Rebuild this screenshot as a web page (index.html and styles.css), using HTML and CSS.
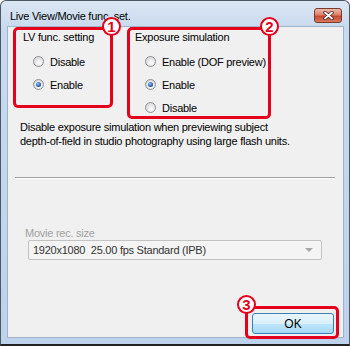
FILE: index.html
```html
<!DOCTYPE html>
<html lang="en">
<head>
    <meta charset="UTF-8">
    <title>Live View/Movie func. set.</title>
    <link rel="stylesheet" href="styles.css">
</head>
<body>
    <div class="window">
        <div class="titlebar">
            <div class="title">Live View/Movie func. set.</div>
            <div class="close">
                <svg width="13" height="9" viewBox="0 0 13 9">
                    <path d="M3 1.5 L10 7.5 M10 1.5 L3 7.5" stroke="#3a2020" stroke-width="3.4" stroke-linecap="round"/>
                    <path d="M3 1.5 L10 7.5 M10 1.5 L3 7.5" stroke="#fff" stroke-width="1.8" stroke-linecap="round"/>
                </svg>
            </div>
        </div>

        <div class="client">
            <div class="groups">
                <div class="mark group-lv">
                    <span class="num">1</span>
                    <div class="group-title">LV func. setting</div>
                    <div class="opts">
                        <div class="opt"><span class="radio"></span>Disable</div>
                        <div class="opt"><span class="radio checked"></span>Enable</div>
                    </div>
                </div>
                <div class="mark group-exp">
                    <span class="num">2</span>
                    <div class="group-title">Exposure simulation</div>
                    <div class="opts">
                        <div class="opt"><span class="radio"></span>Enable (DOF preview)</div>
                        <div class="opt"><span class="radio checked"></span>Enable</div>
                        <div class="opt"><span class="radio"></span>Disable</div>
                    </div>
                </div>
            </div>

            <p class="desc">Disable exposure simulation when previewing subject<br>depth-of-field in studio photography using large flash units.</p>

            <div class="separator"></div>

            <div class="field-label">Movie rec. size</div>
            <div class="select">
                <span>1920x1080&nbsp;&nbsp;25.00 fps Standard (IPB)</span>
                <span class="arrow"></span>
            </div>

            <div class="footer">
                <div class="mark ok-mark">
                    <span class="num num-left">3</span>
                    <button class="ok">OK</button>
                </div>
            </div>
        </div>
    </div>
</body>
</html>
```

FILE: styles.css
```css
body {
    margin: 0;
    font-family: 'Liberation Sans', Arial, sans-serif;
    font-size: 11px;
    letter-spacing: -0.25px;
    color: #000;
    background: #fff;
}
.window {
    width: 350px;
    height: 346px;
    box-sizing: border-box;
    border: 1px solid #4d5866;
    border-bottom: 2px solid #222;
    border-radius: 6px 6px 0 0;
    background: linear-gradient(#dbe6f3, #c9daee 26px, #bdd2eb);
    display: flex;
    flex-direction: column;
}
.titlebar {
    height: 25px;
    display: flex;
    justify-content: space-between;
    align-items: flex-start;
}
.title {
    padding: 8px 0 0 9px;
    line-height: 14px;
    color: #000;
}
.close {
    width: 26px;
    height: 13px;
    margin: 7px 7px 0 0;
    border: 1px solid #7a3a30;
    border-radius: 3px;
    background: linear-gradient(#efb9aa, #dd8069 45%, #c8462f 55%, #d87a5f);
    display: flex;
    align-items: center;
    justify-content: center;
}
.client {
    flex: 1;
    margin: 0 5px 6px 6px;
    border: 1px solid #9fb3cb;
    background: #f0f0f0;
    display: flex;
    flex-direction: column;
}

/* red callout boxes */
.mark {
    position: relative;
    box-sizing: border-box;
    border: 3px solid #e5001c;
    border-radius: 5px;
}
.num {
    position: absolute;
    top: -13px;
    right: -11px;
    width: 19px;
    height: 19px;
    box-sizing: border-box;
    border: 2px solid #e5001c;
    border-radius: 50%;
    background: #fff;
    color: #e5001c;
    font-weight: bold;
    font-size: 15px;
    letter-spacing: 0;
    line-height: 15px;
    text-align: center;
}
.num-left {
    right: auto;
    left: -11px;
    top: -14px;
}

.groups {
    display: flex;
    align-items: flex-start;
    gap: 14px;
    padding-left: 5px;
}
.group-lv {
    width: 100px;
    height: 81px;
    padding-left: 7px;
}
.group-exp {
    width: 144px;
    height: 92px;
    padding-left: 5px;
}
.group-title {
    line-height: 14px;
    white-space: nowrap;
}
.opts {
    margin-top: 6px;
    padding-left: 10px;
}
.opt {
    height: 23px;
    display: flex;
    align-items: center;
    gap: 6px;
    white-space: nowrap;
}
.radio {
    flex: none;
    width: 11px;
    height: 11px;
    box-sizing: border-box;
    border: 1px solid #8c8f94;
    border-radius: 50%;
    background: radial-gradient(circle at 60% 65%, #fdfdfd, #d6d6d6 80%);
    display: flex;
    align-items: center;
    justify-content: center;
}
.radio.checked::after {
    content: "";
    width: 5px;
    height: 5px;
    border-radius: 50%;
    background: radial-gradient(circle at 40% 35%, #8fc4f5, #1d4f97 70%);
}

.desc {
    margin: 1px 0 0 12px;
    line-height: 14px;
}
.separator {
    margin: 29px 8px 0 7px;
    height: 1px;
    background: #a0a0a0;
    border-bottom: 1px solid #fff;
}
.field-label {
    margin: 47px 0 0 17px;
    line-height: 14px;
    color: #a0a0a0;
}
.select {
    margin: 0 0 0 20px;
    width: 294px;
    height: 20px;
    box-sizing: border-box;
    border: 1px solid #c2c2c2;
    border-radius: 2px;
    background: #f4f4f4;
    color: #333;
    padding: 0 8px 0 4px;
    display: flex;
    align-items: center;
    justify-content: space-between;
}
.arrow {
    width: 0;
    height: 0;
    border-left: 4px solid transparent;
    border-right: 4px solid transparent;
    border-top: 4px solid #a8a8a8;
}
.footer {
    margin-top: auto;
    margin-bottom: -2px;
    margin-right: 4px;
    display: flex;
    justify-content: flex-end;
}
.ok-mark {
    padding: 4px 2px 2px 4px;
}
.ok {
    display: block;
    width: 82px;
    height: 21px;
    border: 1px solid #3c7fb1;
    border-radius: 3px;
    background: linear-gradient(#eaf6fd, #d9f0fc 50%, #bee6fd 52%, #a7d9f5);
    font-family: 'Liberation Sans', Arial, sans-serif;
    font-size: 12px;
    color: #000;
    padding: 0;
}
```
